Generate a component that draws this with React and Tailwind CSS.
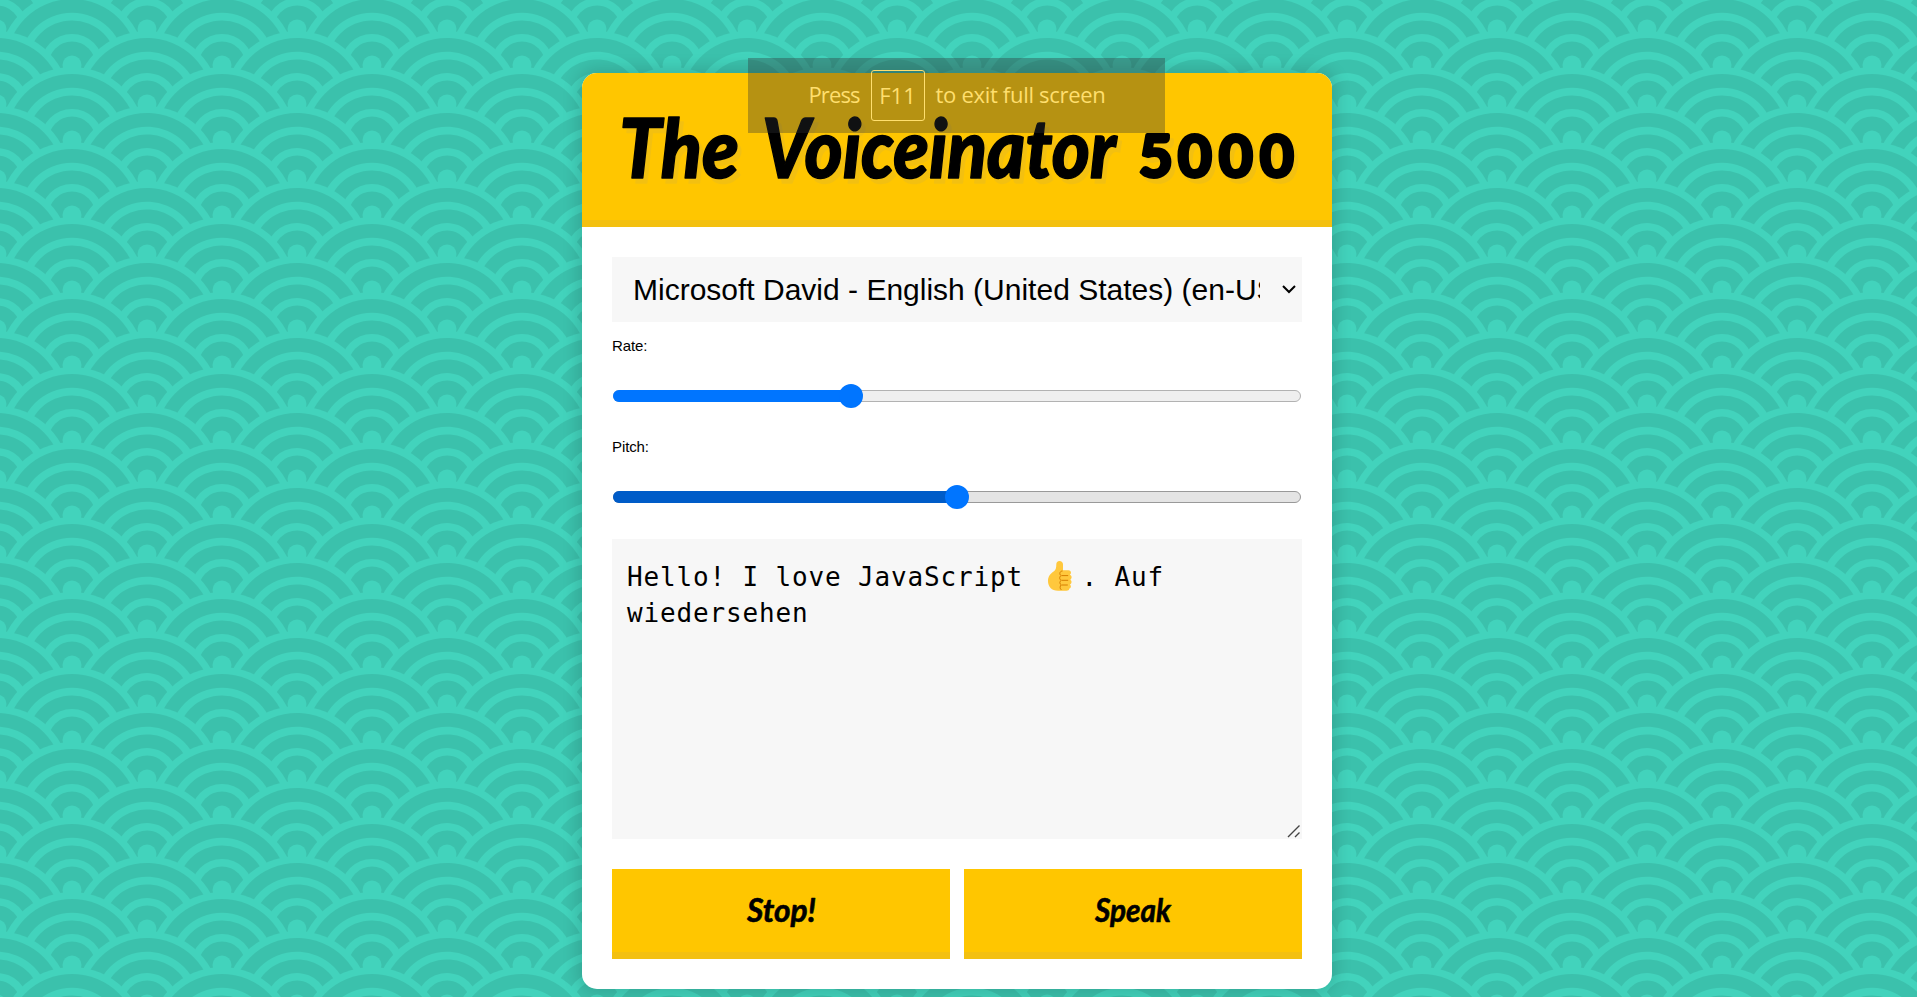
import React from "react";

function Fan({ cx, cy }) {
  return (
    <g>
      <circle cx={cx} cy={cy} r="73" fill="#42d3bc" />
      <circle cx={cx} cy={cy} r="66" fill="#3bc1ac" />
      <circle cx={cx} cy={cy} r="52.3" fill="#42d3bc" />
      <circle cx={cx} cy={cy} r="44.6" fill="#3bc1ac" />
      <circle cx={cx} cy={cy} r="31" fill="#42d3bc" />
      <circle cx={cx} cy={cy} r="23.5" fill="#3bc1ac" />
      <circle cx={cx} cy={cy} r="9.5" fill="#42d3bc" />
    </g>
  );
}

function Waves() {
  const fans = [];
  for (let k = -3; k < 3; k++) {
    fans.push([-3, 104 + k * 75], [147, 104 + k * 75], [-78, 140 + k * 75], [72, 140 + k * 75], [222, 140 + k * 75]);
  }
  return (
    <svg className="absolute inset-0 h-full w-full" aria-hidden="true">
      <defs>
        <pattern id="waves" width="150" height="75" patternUnits="userSpaceOnUse">
          {fans.map(([x, y]) => (
            <Fan key={x + "," + y} cx={x} cy={y} />
          ))}
        </pattern>
      </defs>
      <rect width="100%" height="100%" fill="url(#waves)" />
    </svg>
  );
}

function Slider({ label, percent, fill, track, border }) {
  return (
    <label className="block">
      <span className="block h-[15px] text-[15px] leading-[15px] tracking-[-0.1px]">{label}</span>
      <span className="mt-[31px] mb-[31px] flex h-6 items-center px-px">
        <span className={"relative block h-3 w-full rounded-full border " + track + " " + border}>
          <span className={"absolute -top-px -left-px block h-3 rounded-full " + fill} style={{ width: percent }} />
          <span className="absolute -top-[7px] block size-6 -translate-x-1/2 rounded-full bg-[#0075ff]" style={{ left: percent }} />
        </span>
      </span>
    </label>
  );
}

function ThumbsUp() {
  return (
    <svg viewBox="0 0 24 30" className="mr-[10px] ml-[8px] inline-block h-[30px] w-6 align-[-5px]" role="img">
      <path
        d="M8.300 3.500C8.300 1.300 9.500 0 11.500 0S15 1.300 15 3.500V9.300h5.500c2.600 0 3.300 3.300 1.400 4.500 2.200.8 2.200 4 .4 4.900 1.800 1.100 1.500 4-.3 4.800 1.500 1.300 1 3.700-.6 4.100-.2 1.500-1.300 2.200-2.900 2.200H10C3.500 29.800 0 25.500 0 20c0-5 2.800-7.700 6-9.800C7.900 8.800 8.300 6.500 8.300 3.500z"
        fill="#ffc83d"
      />
      <path
        d="M14.500 10c-3 0-3.500 3.600-1.300 4.600-2 1-2 3.800 0 4.700-1.800.9-1.800 3.700 0 4.600-1.500 1-1.500 4 .2 5M13.500 14.600h6.700M13.500 19.300h6.700M13.500 24h6.300"
        fill="none"
        stroke="#d67d00"
        strokeWidth="1"
      />
    </svg>
  );
}

function Button({ children, width }) {
  return (
    <button className="flex h-[90px] flex-1 items-center justify-center bg-[#ffc600] pb-1 shadow-[inset_0_-7px_0_#f3c010]">
      <svg className="h-[60px] overflow-visible" width={width}>
        <text x="0" y="40" textLength={width} lengthAdjust="spacingAndGlyphs" className="fill-black stroke-black font-[Lato] text-[33px] font-bold italic" strokeWidth="0.6" strokeLinejoin="round">
          {children}
        </text>
      </svg>
    </button>
  );
}

const titleWords = [
  ["The", 619, 120],
  ["Voiceinator", 762, 354],
];

function Title() {
  return (
    <h1 className="h-[154px] bg-[#ffc600] shadow-[inset_0_-7px_0_#f3c010]">
      <svg className="h-[147px] w-full [filter:drop-shadow(4px_5px_0_#f3c010)]" viewBox="582 73 750 147">
        {titleWords.map(([word, x, width]) => (
          <text key={word} x={x} y="178" textLength={width} lengthAdjust="spacingAndGlyphs" className="fill-black stroke-black font-[Lato] text-[82px] font-black italic" strokeWidth="1.500" strokeLinejoin="round">
            {word}
          </text>
        ))}
        <text x="1139 1178 1219 1260" y="177" className="fill-black stroke-black font-[Lato] text-[58px] font-bold" strokeWidth="4" strokeLinejoin="round">
          5000
        </text>
      </svg>
    </h1>
  );
}

function FullScreenHint() {
  return (
    <div className="absolute top-[58px] left-[748px] flex h-[75px] w-[417px] justify-center bg-[#2d3134]/35 pt-3 font-['Open_Sans',sans-serif] text-[22px] leading-[48px] whitespace-nowrap text-[#ffdf6e]">
      <span className="w-[52px] tracking-[-0.9px]">Press</span>
      <span className="mx-[10px] h-[51px] w-[54px] rounded-[3px] border border-[#ffdf6e] text-center">F11</span>
      <span className="w-[170px] pl-px tracking-[-0.3px]">to exit full screen</span>
    </div>
  );
}

export default function App() {
  return (
    <main className="relative h-[997px] w-full overflow-hidden bg-[#3bc1ac] font-['Liberation_Sans',sans-serif] text-black">
      <Waves />
      <div className="relative flex justify-center pt-[73px] pr-[3px]">
        <div className="w-[750px] rounded-[15px] shadow-[0_0_15px_5px_rgba(0,0,0,0.13)]">
          <div className="h-[916px] overflow-hidden rounded-[15px] bg-white">
            <Title />
            <div className="px-[30px] pt-[30px]">
              <div className="flex h-[65px] items-center bg-[#f7f7f7] pr-1.5 pl-[21px]">
                <span className="w-[627px] overflow-hidden text-[30px] leading-10 whitespace-nowrap">
                  Microsoft David - English (United States) (en-US)
                </span>
                <svg viewBox="0 0 14 9" className="ml-auto h-[9px] w-[14px]" aria-hidden="true">
                  <path d="M1 1l6 6 6-6" fill="none" stroke="black" strokeWidth="2" />
                </svg>
              </div>
              <div className="pt-4">
                <Slider label="Rate:" percent="34.6%" fill="bg-[#0075ff]" track="bg-[#efefef]" border="border-[#b2b2b2]" />
                <Slider label="Pitch:" percent="50%" fill="bg-[#005cc8]" track="bg-[#e4e4e4]" border="border-[#999999]" />
              </div>
              <div className="relative -mt-px h-[300px] bg-[#f7f7f7] px-[15px] pt-5 font-['DejaVu_Sans_Mono',monospace] text-[26px] leading-9 tracking-[0.85px]">
                Hello! I love JavaScript <ThumbsUp />. Auf
                <br />
                wiedersehen
                <svg viewBox="0 0 14 14" className="absolute right-px bottom-px size-[14px]" aria-hidden="true">
                  <path d="M1 13L12.500 1.500M8 13l4.500-4.500" stroke="#444444" strokeWidth="1.400" />
                </svg>
              </div>
              <div className="mt-[30px] flex gap-[14px]">
                <Button width={69}>Stop!</Button>
                <Button width={76}>Speak</Button>
              </div>
            </div>
          </div>
        </div>
      </div>
      <FullScreenHint />
    </main>
  );
}
